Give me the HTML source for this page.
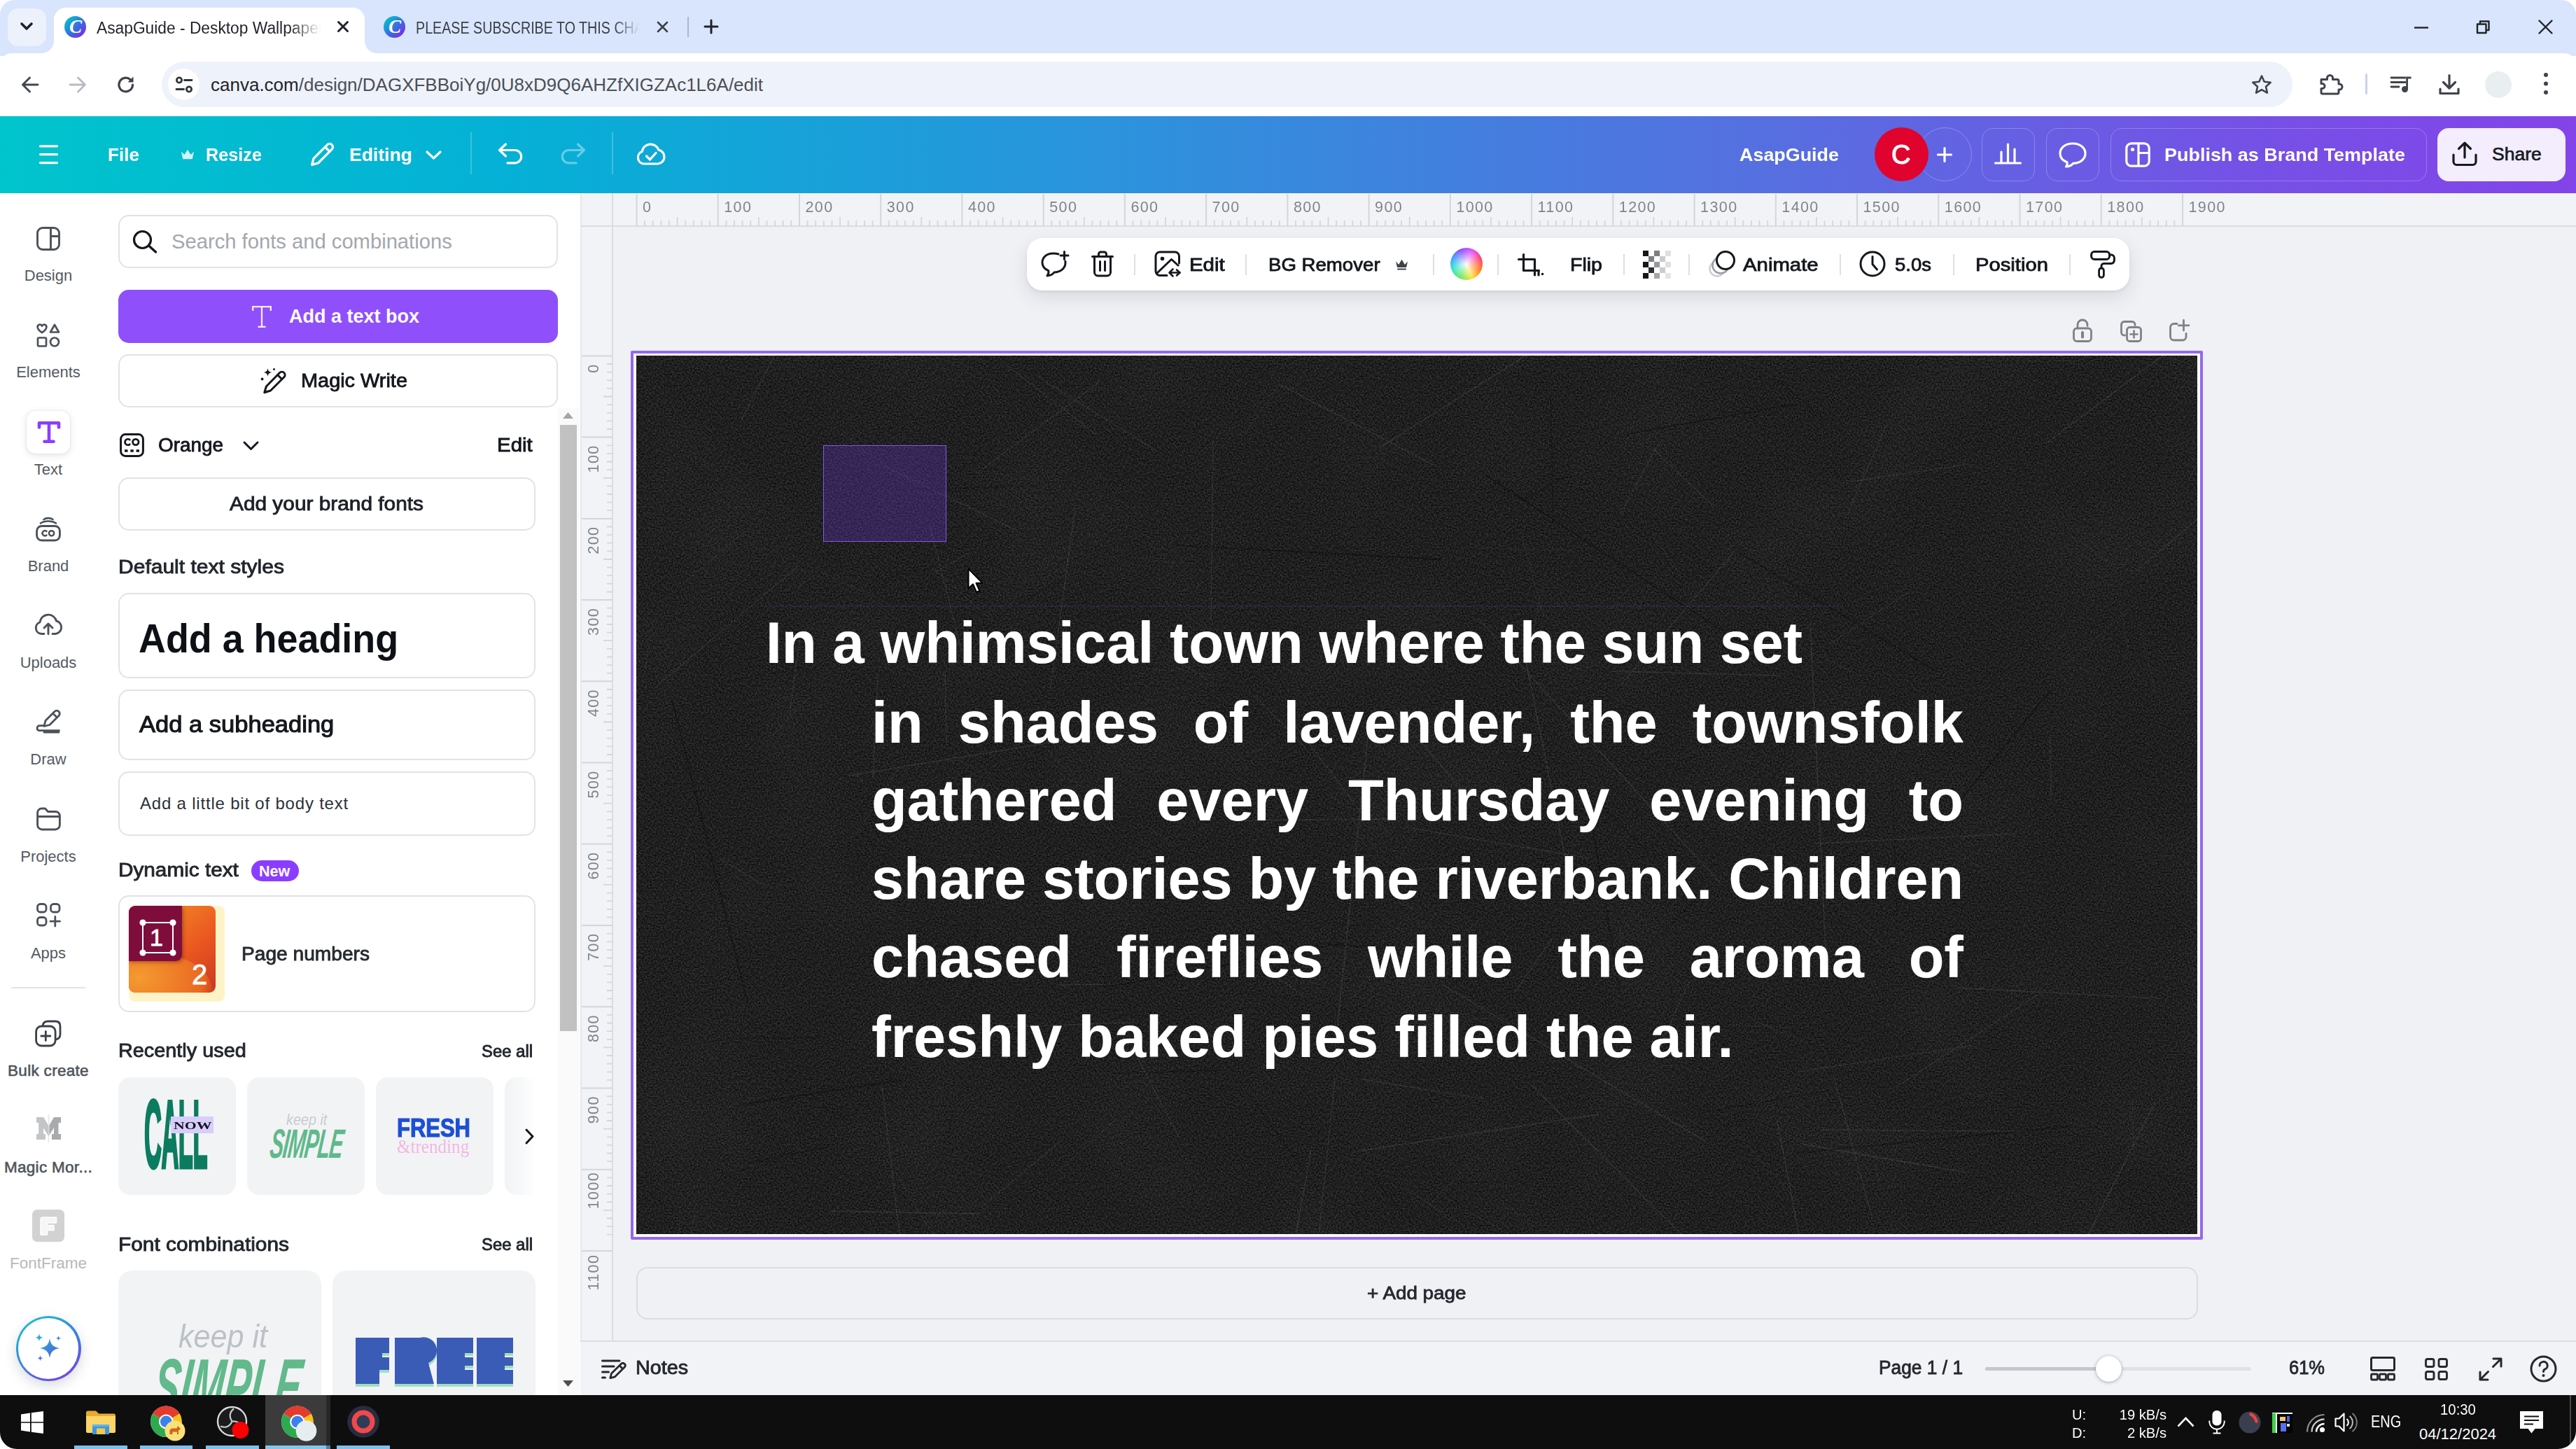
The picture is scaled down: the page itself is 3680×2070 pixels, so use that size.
<!DOCTYPE html>
<html>
<head>
<meta charset="utf-8">
<title>Canva</title>
<style>
*{box-sizing:border-box;margin:0;padding:0}
html,body{width:3680px;height:2070px;overflow:hidden;background:#fff}
body{font-family:"Liberation Sans",sans-serif;color:#0e1318;position:relative}
.abs{position:absolute}
.t{position:absolute;white-space:nowrap;line-height:1;transform-origin:0 0}
svg{position:absolute;overflow:visible}
/* ---------- chrome ---------- */
#tabbar{left:0;top:0;width:3680px;height:80px;background:#d8e5fc}
#tabsearch{left:11px;top:11.5px;width:55px;height:54px;border-radius:15px;background:#ecf1fc}
#tab1{left:77px;top:11px;width:444px;height:66.5px;background:#fff;border-radius:17px 17px 0 0}
#tab1:before,#tab1:after{content:"";position:absolute;bottom:2px;width:17px;height:17px;background:radial-gradient(circle at 0 0,rgba(255,255,255,0) 16.5px,#fff 17px)}
#tab1:before{left:-17px}
#tab1:after{right:-17px;transform:scaleX(-1)}
#toolbar{left:0;top:75.5px;width:3680px;height:90.5px;background:#fff;border-radius:17px 17px 0 0}
#urlpill{left:231px;top:88px;width:3044px;height:65px;border-radius:33px;background:#eef2fa}
#siteinfo{left:240px;top:98px;width:45px;height:45px;border-radius:50%;background:#fff}
/* ---------- canva header ---------- */
#chead{left:0;top:166px;width:3680px;height:110px;background:linear-gradient(90deg,#00c4cc 0%,#05b0d6 20%,#2a94dc 42%,#5570e0 68%,#7650e6 88%,#8344ea 100%)}
.hbtn{position:absolute;top:183px;height:76px;border-radius:16px;border:1.8px solid rgba(255,255,255,.24)}
/* ---------- sidebar / panel ---------- */
#sidebar{left:0;top:276px;width:137px;height:1717px;background:#fff}
#panel{left:137px;top:276px;width:693px;height:1717px;background:#fff}
.slab{position:absolute;left:0;width:138px;text-align:center;font-size:22px;color:#555a62;line-height:1;white-space:nowrap}
.box{position:absolute;border:2px solid #e0e3e7;border-radius:15px;background:#fff}
/* ---------- stage ---------- */
#stage{left:830px;top:276px;width:2850px;height:1642px;background:#f0f1f5}
#bottombar{left:829px;top:1915px;width:2851px;height:79px;background:#f2f3f7;border-top:2px solid #dcdee3}
.ct{position:absolute;left:1245px;width:1560px;font-size:83px;font-weight:bold;color:#fff;line-height:112px;height:112px;white-space:nowrap;transform-origin:0 0;text-shadow:0 0 1px rgba(255,255,255,.3)}
.ct.j{text-align:justify;text-align-last:justify;white-space:normal}
#taskbar{left:0;top:1993px;width:3680px;height:77px;background:#0e0e0f}
</style>
</head>
<body>
<!-- CHROME TAB BAR -->
<div id="tabbar" class="abs"></div>
<div id="tabsearch" class="abs"></div>
<div id="tab1" class="abs"></div>
<div id="toolbar" class="abs"></div>
<div id="urlpill" class="abs"></div>
<div id="siteinfo" class="abs"></div>
<!-- tab search chevron -->
<svg style="left:27px;top:29px" width="22" height="18" viewBox="0 0 22 18"><path d="M4 5 L11 12 L18 5" fill="none" stroke="#1f2328" stroke-width="3.6" stroke-linecap="round" stroke-linejoin="round"/></svg>
<!-- tab1 favicon -->
<div class="abs" style="left:92px;top:23px;width:31px;height:31px;border-radius:50%;background:linear-gradient(135deg,#00c4cc 10%,#3a6be0 55%,#7d2ae8 90%)"></div>
<div class="t" style="left:99px;top:25px;font-family:'Liberation Serif',serif;font-style:italic;font-weight:bold;font-size:27px;color:#fff">C</div>
<div class="t" style="left:138px;top:28.5px;font-size:23px;color:#1f2328;width:324px;overflow:hidden;transform:scaleX(.99);-webkit-mask-image:linear-gradient(90deg,#000 86%,transparent 100%)">AsapGuide - Desktop Wallpaper</div>
<svg style="left:481px;top:29px" width="18" height="18" viewBox="0 0 18 18"><path d="M2.5 2.5 L15.5 15.5 M15.5 2.5 L2.5 15.5" stroke="#1f2328" stroke-width="3" stroke-linecap="round"/></svg>
<!-- tab2 -->
<div class="abs" style="left:548px;top:23px;width:31px;height:31px;border-radius:50%;background:linear-gradient(135deg,#00c4cc 10%,#3a6be0 55%,#7d2ae8 90%)"></div>
<div class="t" style="left:555px;top:25px;font-family:'Liberation Serif',serif;font-style:italic;font-weight:bold;font-size:27px;color:#fff">C</div>
<div class="t" style="left:594px;top:28.5px;font-size:23px;color:#3a3f47;width:377px;overflow:hidden;transform:scaleX(.856);-webkit-mask-image:linear-gradient(90deg,#000 88%,transparent 99%)">PLEASE SUBSCRIBE TO THIS CHANNEL</div>
<svg style="left:938px;top:30px" width="17" height="17" viewBox="0 0 17 17"><path d="M2 2 L15 15 M15 2 L2 15" stroke="#3a3f47" stroke-width="2.6" stroke-linecap="round"/></svg>
<div class="abs" style="left:982px;top:24px;width:2px;height:29px;background:#a9b7d0"></div>
<svg style="left:1005px;top:27px" width="22" height="22" viewBox="0 0 22 22"><path d="M11 2 V20 M2 11 H20" stroke="#1f2328" stroke-width="3" stroke-linecap="round"/></svg>
<!-- window controls -->
<svg style="left:3449px;top:38px" width="20" height="3" viewBox="0 0 20 3"><path d="M0 1.5 H20" stroke="#1f2328" stroke-width="2.4"/></svg>
<svg style="left:3537px;top:28px" width="21" height="21" viewBox="0 0 21 21"><path d="M2 6.5 H14.5 V19 H2 Z M6 6 V2.5 H18.5 V15 H15" fill="none" stroke="#1f2328" stroke-width="2.4" stroke-linejoin="round"/></svg>
<svg style="left:3626px;top:28px" width="21" height="21" viewBox="0 0 21 21"><path d="M1.5 1.5 L19.5 19.5 M19.5 1.5 L1.5 19.5" stroke="#1f2328" stroke-width="2.4" stroke-linecap="round"/></svg>
<!-- nav buttons -->
<svg style="left:30px;top:108px" width="26" height="26" viewBox="0 0 26 26"><path d="M24 13 H3 M12.5 3 L2.5 13 L12.5 23" fill="none" stroke="#42474e" stroke-width="2.9" stroke-linecap="round" stroke-linejoin="round"/></svg>
<svg style="left:98px;top:108px" width="26" height="26" viewBox="0 0 26 26"><path d="M2 13 H23 M13.5 3 L23.5 13 L13.5 23" fill="none" stroke="#b9bcc2" stroke-width="2.9" stroke-linecap="round" stroke-linejoin="round"/></svg>
<svg style="left:167px;top:108px" width="26" height="26" viewBox="0 0 26 26"><path d="M22.5 13 A9.8 9.8 0 1 1 19.2 5.7" fill="none" stroke="#3f444b" stroke-width="3.2" stroke-linecap="round"/><path d="M23.5 1.5 V9.5 H15.5 Z" fill="#3f444b"/></svg>
<!-- site info (tune) icon -->
<svg style="left:250px;top:109px" width="26" height="24" viewBox="0 0 26 24"><circle cx="6" cy="5.5" r="3.6" fill="none" stroke="#30343a" stroke-width="2.8"/><path d="M13.5 5.5 H24" stroke="#30343a" stroke-width="2.8" stroke-linecap="round"/><circle cx="20" cy="18.5" r="3.6" fill="none" stroke="#30343a" stroke-width="2.8"/><path d="M2 18.5 H12.5" stroke="#30343a" stroke-width="2.8" stroke-linecap="round"/></svg>
<div class="t" style="left:301px;top:107.5px;font-size:26px;color:#4b4f56"><span style="color:#1f2328">canva.com</span>/design/DAGXFBBoiYg/0U8xD9Q6AHZfXIGZAc1L6A/edit</div>
<!-- star -->
<svg style="left:3216px;top:106px" width="30" height="29" viewBox="0 0 30 29"><path d="M15 2.5 L18.7 10.8 L27.7 11.7 L21 17.8 L22.9 26.6 L15 22.1 L7.1 26.6 L9 17.8 L2.3 11.7 L11.3 10.8 Z" fill="none" stroke="#3f444b" stroke-width="2.6" stroke-linejoin="round"/></svg>
<!-- extensions puzzle -->
<svg style="left:3313px;top:104px" width="33" height="33" viewBox="0 0 33 33"><path d="M3 9.5 H11.5 V7.5 A4 4 0 0 1 19.5 7.5 V9.5 H26 A2 2 0 0 1 28 11.5 V16 H29 A4 4 0 0 1 29 24 H28 V28 A2 2 0 0 1 26 30 H5 A2 2 0 0 1 3 28 V22.5 H4.5 A3.5 3.5 0 0 0 4.5 15.5 H3 Z" fill="none" stroke="#3f444b" stroke-width="3" stroke-linejoin="round"/></svg>
<div class="abs" style="left:3379px;top:105px;width:3px;height:30px;background:#c9d3e6;border-radius:2px"></div>
<!-- media control -->
<svg style="left:3414px;top:108px" width="32" height="26" viewBox="0 0 32 26"><path d="M2 3 H22 M2 9.5 H22 M2 16 H13" stroke="#3f444b" stroke-width="2.8" stroke-linecap="round"/><circle cx="21.5" cy="19.5" r="4.5" fill="#3f444b"/><path d="M24.6 19.5 V3 H30.5" fill="none" stroke="#3f444b" stroke-width="2.8"/></svg>
<!-- download -->
<svg style="left:3483px;top:105px" width="32" height="32" viewBox="0 0 32 32"><path d="M16 2.5 V20 M7.5 12.5 L16 21 L24.5 12.5" fill="none" stroke="#3f444b" stroke-width="3.2" stroke-linecap="round" stroke-linejoin="round"/><path d="M3 22 V28.5 H29 V22" fill="none" stroke="#3f444b" stroke-width="3.2" stroke-linecap="round" stroke-linejoin="round"/></svg>
<div class="abs" style="left:3550px;top:102px;width:38px;height:38px;border-radius:50%;background:#e9eef0"></div>
<div class="abs" style="left:3634px;top:104px;width:6px;height:6px;border-radius:50%;background:#3f444b;box-shadow:0 12.5px 0 #3f444b,0 25px 0 #3f444b"></div>
<!--CHROME-DETAILS-->

<!-- CANVA HEADER -->
<div id="chead" class="abs"></div>
<!-- hamburger -->
<svg style="left:56px;top:206px" width="27" height="29" viewBox="0 0 27 29"><path d="M1.5 2.8 H25.5 M1.5 14.6 H25.5 M1.5 26.6 H25.5" stroke="#fff" stroke-width="3.2" stroke-linecap="round"/></svg>
<div class="t" style="left:154px;top:208px;font-size:26.5px;font-weight:bold;color:#fff;transform:scaleX(.985)">File</div>
<!-- crown -->
<svg style="left:258px;top:213px" width="20" height="15" viewBox="0 0 20 15"><path d="M1 3.5 L5.5 8 L10 .8 L14.5 8 L19 3.5 L16.8 14.2 H3.2 Z" fill="rgba(255,255,255,.82)"/></svg>
<div class="t" style="left:294px;top:208px;font-size:26.5px;font-weight:bold;color:#fff;transform:scaleX(.952)">Resize</div>
<!-- pencil -->
<svg style="left:443px;top:203px" width="35" height="35" viewBox="0 0 35 35"><path d="M24.5 3.8 a4.6 4.6 0 0 1 6.6 6.6 L11.5 30 L2.6 32.4 L5 23.5 Z M21.5 7 L28 13.5" fill="none" stroke="#fff" stroke-width="3.2" stroke-linejoin="round" stroke-linecap="round"/></svg>
<div class="t" style="left:499px;top:208px;font-size:26.5px;font-weight:bold;color:#fff">Editing</div>
<svg style="left:608px;top:215px" width="23" height="13" viewBox="0 0 23 13"><path d="M2 2 L11.5 11 L21 2" fill="none" stroke="#fff" stroke-width="3.2" stroke-linecap="round" stroke-linejoin="round"/></svg>
<div class="abs" style="left:672px;top:189px;width:2px;height:60px;background:rgba(255,255,255,.22)"></div>
<!-- undo -->
<svg style="left:711px;top:204px" width="37" height="31" viewBox="0 0 37 31"><path d="M11.5 2 L2.5 10.5 L11.5 19 M3.5 10.5 H24.5 A9.2 9.2 0 0 1 24.5 28.9 H14" fill="none" stroke="#fff" stroke-width="3.2" stroke-linecap="round" stroke-linejoin="round"/></svg>
<!-- redo -->
<svg style="left:800px;top:204px" width="37" height="31" viewBox="0 0 37 31"><path d="M25.5 2 L34.5 10.5 L25.5 19 M33.5 10.5 H12.5 A9.2 9.2 0 0 0 12.5 28.9 H23" fill="none" stroke="rgba(255,255,255,.38)" stroke-width="3.2" stroke-linecap="round" stroke-linejoin="round"/></svg>
<div class="abs" style="left:874px;top:189px;width:2px;height:60px;background:rgba(255,255,255,.22)"></div>
<!-- cloud check -->
<svg style="left:909px;top:203px" width="42" height="33" viewBox="0 0 42 33"><path d="M11 31 A9 9 0 0 1 8.2 13.6 A12.2 12.2 0 0 1 31.8 11.2 A10 10 0 0 1 31 31 Z" fill="none" stroke="#fff" stroke-width="3.2" stroke-linejoin="round"/><path d="M14.5 20 L19.5 25 L28 15.5" fill="none" stroke="#fff" stroke-width="3.2" stroke-linecap="round" stroke-linejoin="round"/></svg>
<!-- right side -->
<div class="t" style="left:2485px;top:208px;font-size:26.5px;font-weight:bold;color:#fff;transform:scaleX(1.015)">AsapGuide</div>
<div class="abs" style="left:2740px;top:182px;width:77px;height:77px;border-radius:50%;border:1.8px solid rgba(255,255,255,.26)"></div>
<svg style="left:2767px;top:210px" width="22" height="22" viewBox="0 0 22 22"><path d="M11 1.5 V20.5 M1.5 11 H20.5" stroke="#fff" stroke-width="3.2" stroke-linecap="round"/></svg>
<div class="abs" style="left:2678px;top:182px;width:77px;height:77px;border-radius:50%;background:#e0032e"></div>
<div class="t" style="left:2702px;top:202px;font-size:38px;color:#fff;-webkit-text-stroke:1px #fff">C</div>
<div class="hbtn" style="left:2831px;width:76px"></div>
<svg style="left:2849px;top:204px" width="39" height="31" viewBox="0 0 39 31"><path d="M1.5 29 H37.5 M10 28 V13 M19.5 28 V2 M29 28 V9" stroke="#fff" stroke-width="3.2" stroke-linecap="round"/></svg>
<div class="hbtn" style="left:2923px;width:76px"></div>
<svg style="left:2941px;top:203px" width="40" height="37" viewBox="0 0 40 37"><path d="M20 2 C9.5 2 2 8.2 2 16.2 C2 22 6 26.5 12 28.8 C12.6 31 12 33 10.5 35 C15 34.8 18.5 33 20.5 30.4 C30.8 30.3 38 24.2 38 16.2 C38 8.2 30.5 2 20 2 Z" fill="none" stroke="#fff" stroke-width="3.2" stroke-linejoin="round"/></svg>
<div class="hbtn" style="left:3015px;width:452px"></div>
<svg style="left:3036px;top:203px" width="36" height="36" viewBox="0 0 36 36"><rect x="1.8" y="1.8" width="32.4" height="32.4" rx="7" fill="none" stroke="#fff" stroke-width="3.2"/><path d="M19 2 V34 M19 15.5 H34" stroke="#fff" stroke-width="3.2"/><circle cx="10.5" cy="10.5" r="2.6" fill="#fff"/></svg>
<div class="t" style="left:3092px;top:208px;font-size:26.5px;font-weight:bold;color:#fff;transform:scaleX(1.017)">Publish as Brand Template</div>
<div class="abs" style="left:3482px;top:183px;width:183px;height:76px;border-radius:16px;background:#f3edfd"></div>
<svg style="left:3503px;top:202px" width="36" height="36" viewBox="0 0 36 36"><path d="M18 23 V3 M9.5 10.5 L18 2.2 L26.5 10.5" fill="none" stroke="#161a1f" stroke-width="3.2" stroke-linecap="round" stroke-linejoin="round"/><path d="M2 19 V29 A4.5 4.5 0 0 0 6.5 33.5 H29.5 A4.5 4.5 0 0 0 34 29 V19" fill="none" stroke="#161a1f" stroke-width="3.2" stroke-linecap="round"/></svg>
<div class="t" style="left:3560px;top:207px;font-size:26.5px;color:#161a1f;-webkit-text-stroke:.7px #161a1f">Share</div>
<!--HEADER-DETAILS-->

<!-- SIDEBAR + PANEL -->
<div id="sidebar" class="abs"></div>
<div id="panel" class="abs"></div>
<!-- Design -->
<svg style="left:52px;top:324px" width="34" height="34" viewBox="0 0 34 34"><rect x="1.5" y="1.5" width="31" height="31" rx="7.5" fill="none" stroke="#4c525a" stroke-width="2.9"/><path d="M20.5 2 V32 M20.5 13.5 H32" stroke="#4c525a" stroke-width="2.9"/></svg>
<div class="slab" style="top:383px">Design</div>
<!-- Elements -->
<svg style="left:52px;top:462px" width="34" height="34" viewBox="0 0 34 34"><path d="M8 13.2 C3.5 10 1.6 7.6 1.6 5.2 C1.6 1.4 6.4 .4 8 3.8 C9.6 .4 14.4 1.4 14.4 5.2 C14.4 7.6 12.5 10 8 13.2 Z" fill="none" stroke="#4c525a" stroke-width="2.7" stroke-linejoin="round"/><path d="M26 2 L32 12.5 H20 Z" fill="none" stroke="#4c525a" stroke-width="2.7" stroke-linejoin="round"/><rect x="2" y="20.5" width="12" height="12" rx="1.5" fill="none" stroke="#4c525a" stroke-width="2.7"/><circle cx="26" cy="26.5" r="6" fill="none" stroke="#4c525a" stroke-width="2.7"/></svg>
<div class="slab" style="top:521px">Elements</div>
<!-- Text (active) -->
<div class="abs" style="left:38px;top:587px;width:62px;height:61px;border-radius:13px;background:#fff;box-shadow:0 2px 10px rgba(60,66,80,.16),0 0 2px rgba(60,66,80,.12)"></div>
<svg style="left:53px;top:601px" width="34" height="33" viewBox="0 0 34 33"><path d="M3 9.5 V3.2 H31 V9.5 M17 3.2 V29.8 M10.5 29.8 H23.5" fill="none" stroke="#8b3dff" stroke-width="4.6" stroke-linejoin="round" stroke-linecap="round"/></svg>
<div class="slab" style="top:660px">Text</div>
<!-- Brand -->
<svg style="left:51px;top:738px" width="36" height="36" viewBox="0 0 36 36"><rect x="1.6" y="13.5" width="32.8" height="20.5" rx="7" fill="none" stroke="#4c525a" stroke-width="2.9"/><path d="M7 9.5 C13 5.5 23 5.5 29 9.5 M11.5 4 C15 1.6 21 1.6 24.5 4" fill="none" stroke="#4c525a" stroke-width="2.7" stroke-linecap="round"/><path d="M15.5 21 A3.6 3.6 0 1 0 15.5 26.5" fill="none" stroke="#4c525a" stroke-width="2.5" stroke-linecap="round"/><circle cx="22.6" cy="23.8" r="3.6" fill="none" stroke="#4c525a" stroke-width="2.5"/></svg>
<div class="slab" style="top:798px">Brand</div>
<!-- Uploads -->
<svg style="left:49px;top:876px" width="40" height="32" viewBox="0 0 40 32"><path d="M14 29.5 H10.5 A8.6 8.6 0 0 1 8 12.8 A12 12 0 0 1 31.5 11 A9.4 9.4 0 0 1 30 29.5 H26" fill="none" stroke="#4c525a" stroke-width="2.9" stroke-linecap="round" stroke-linejoin="round"/><path d="M20 29.8 V15.5 M14 21 L20 15 L26 21" fill="none" stroke="#4c525a" stroke-width="2.9" stroke-linecap="round" stroke-linejoin="round"/></svg>
<div class="slab" style="top:936px">Uploads</div>
<!-- Draw -->
<svg style="left:51px;top:1013px" width="37" height="36" viewBox="0 0 37 36"><path d="M27 3.4 a4.2 4.2 0 0 1 6 6 L20 22.5 L12 24.5 L14 16.5 Z M24.5 6 L30.5 12" fill="none" stroke="#4c525a" stroke-width="2.8" stroke-linejoin="round" stroke-linecap="round"/><path d="M12 24.5 H5.5 A3.4 3.4 0 0 0 5.5 31.5 H33.5 M12 34 H33" fill="none" stroke="#4c525a" stroke-width="2.8" stroke-linecap="round" stroke-linejoin="round" transform="translate(0,-.8)"/></svg>
<div class="slab" style="top:1074px">Draw</div>
<!-- Projects -->
<svg style="left:52px;top:1153px" width="35" height="34" viewBox="0 0 35 34"><path d="M1.6 8 A6 6 0 0 1 7.6 2 H12.5 L16.5 6.5 H27.4 A6 6 0 0 1 33.4 12.5 V25.5 A6.5 6.5 0 0 1 26.9 32 H8.1 A6.5 6.5 0 0 1 1.6 25.5 Z M2 13.5 H33" fill="none" stroke="#4c525a" stroke-width="2.9" stroke-linejoin="round"/></svg>
<div class="slab" style="top:1213px">Projects</div>
<!-- Apps -->
<svg style="left:52px;top:1290px" width="35" height="34" viewBox="0 0 35 34"><rect x="1.5" y="1.5" width="12.5" height="11.5" rx="4" fill="none" stroke="#4c525a" stroke-width="2.8"/><rect x="20.5" y="1.5" width="12.5" height="11.5" rx="4" fill="none" stroke="#4c525a" stroke-width="2.8"/><rect x="1.5" y="20.5" width="12.5" height="11.5" rx="4" fill="none" stroke="#4c525a" stroke-width="2.8"/><path d="M26.8 19.5 V33 M20 26.2 H33.5" stroke="#4c525a" stroke-width="2.8" stroke-linecap="round"/></svg>
<div class="slab" style="top:1351px">Apps</div>
<div class="abs" style="left:16px;top:1410px;width:106px;height:2px;background:#e1e3e7"></div>
<!-- Bulk create -->
<svg style="left:50px;top:1457px" width="38" height="39" viewBox="0 0 38 39"><path d="M11 8.5 C11.5 4 14 2 18.5 2 H29 C33.5 2 36 4.5 36 9 V20.5 C36 25 34 27.2 30 27.8" fill="none" stroke="#3c4148" stroke-width="2.8" stroke-linecap="round"/><rect x="1.6" y="9" width="27.5" height="28" rx="7.5" fill="none" stroke="#3c4148" stroke-width="2.8"/><path d="M15.3 16.5 V29.5 M8.8 23 H21.8" stroke="#3c4148" stroke-width="2.8" stroke-linecap="round"/></svg>
<div class="slab" style="top:1519px;color:#4f545c;font-size:22.5px;-webkit-text-stroke:.6px #4f545c;letter-spacing:.3px">Bulk create</div>
<!-- Magic Morph -->
<svg style="left:51px;top:1592px" width="37" height="40" viewBox="0 0 37 40"><path d="M1 4 H11 L18.5 17 L26 4 H36 V12 H32.5 V28 H36 V36 H23 V28 H26 V19 L18.5 31 L11 19 V28 H14 V36 H1 V28 H4.5 V12 H1 Z" fill="#a9aaac"/><path d="M18.5 0 V40" stroke="#e9e9e9" stroke-width="2"/><path d="M1 4 H11 L18.5 17 V31 L11 19 V28 H14 V36 H1 V28 H4.5 V12 H1 Z" fill="#c4c5c7"/></svg>
<div class="slab" style="top:1657px;color:#4f545c;font-size:22.5px;-webkit-text-stroke:.6px #4f545c;letter-spacing:.3px">Magic Mor...</div>
<!-- FontFrame -->
<div class="abs" style="left:46px;top:1728px;width:46px;height:46px;border-radius:7px;background:#d2d2d3"></div>
<svg style="left:56px;top:1738px" width="26" height="27" viewBox="0 0 26 27"><path d="M2 4 A3 3 0 0 1 5 1 H24.5 V9 H11.5 V12.5 H21 V19.5 H11.5 V26 H2 Z" fill="#f6f6f6" stroke="#fff" stroke-width="1.5" stroke-linejoin="round"/></svg>
<div class="slab" style="top:1794px;color:#b6b9be;font-size:22.5px">FontFrame</div>
<!-- magic button -->
<div class="abs" style="left:22.5px;top:1880px;width:93px;height:93px;border-radius:50%;background:linear-gradient(150deg,#19c3cf 5%,#3b82e0 50%,#7a3fe0 95%);box-shadow:0 6px 18px rgba(40,50,90,.18)"></div>
<div class="abs" style="left:25.7px;top:1883.2px;width:86.6px;height:86.6px;border-radius:50%;background:#fff"></div>
<svg style="left:47px;top:1903px" width="44" height="46" viewBox="0 0 44 46"><defs><linearGradient id="spk" x1="0" y1="0" x2="1" y2="1"><stop offset="0" stop-color="#23b3d6"/><stop offset="1" stop-color="#5a55e0"/></linearGradient></defs><path d="M24 9 C25.5 18 28.5 21 38 23 C28.5 25 25.5 28 24 37 C22.5 28 19.5 25 10 23 C19.5 21 22.5 18 24 9 Z" fill="url(#spk)"/><path d="M9 2 C9.6 6 10.6 7 14.5 7.8 C10.6 8.6 9.6 9.6 9 13.6 C8.4 9.6 7.4 8.6 3.5 7.8 C7.4 7 8.4 6 9 2 Z" fill="#27add7"/><path d="M36.5 5 C36.9 7.6 37.6 8.3 40.2 8.8 C37.6 9.3 36.9 10 36.5 12.6 C36.1 10 35.4 9.3 32.8 8.8 C35.4 8.3 36.1 7.6 36.5 5 Z" fill="#3f86dd"/><path d="M10.5 33 C10.9 36 11.7 36.8 14.7 37.3 C11.7 37.8 10.9 38.6 10.5 41.6 C10.1 38.6 9.3 37.8 6.3 37.3 C9.3 36.8 10.1 36 10.5 33 Z" fill="#4a6fe0"/></svg>
<!--SIDEBAR-DETAILS-->
<!-- search -->
<div class="box" style="left:169px;top:307px;width:628px;height:76px"></div>
<svg style="left:189px;top:328px" width="36" height="34" viewBox="0 0 36 34"><circle cx="14.5" cy="14.5" r="12" fill="none" stroke="#14181d" stroke-width="3.2"/><path d="M23.5 23 L33.5 32" stroke="#14181d" stroke-width="3.4" stroke-linecap="round"/></svg>
<div class="t" style="left:245px;top:331.3px;font-size:29.2px;color:#a3a7ad">Search fonts and combinations</div>
<!-- add text box -->
<div class="abs" style="left:169px;top:414px;width:628px;height:76px;border-radius:15px;background:#8f50fc"></div>
<svg style="left:360px;top:437px" width="28" height="31" viewBox="0 0 28 31"><path d="M1.2 7 V1.2 H26.8 V7 M14 1.2 V29.6 M8.5 29.8 H19.5" fill="none" stroke="#f6e9ff" stroke-width="2.3" stroke-linejoin="miter"/></svg>
<div class="t" style="left:413px;top:439.3px;font-size:27px;font-weight:bold;color:#fff">Add a text box</div>
<!-- magic write -->
<div class="box" style="left:169px;top:506px;width:628px;height:76px"></div>
<svg style="left:371px;top:525px" width="40" height="39" viewBox="0 0 40 39"><path d="M28.5 7.5 a4.4 4.4 0 0 1 6.3 6.3 L15.5 33 L6.8 35.8 L9.4 27 Z M25.5 10.5 L31.8 16.8" fill="none" stroke="#14181d" stroke-width="3" stroke-linejoin="round" stroke-linecap="round"/><path d="M11.5 1 C12.2 5.2 13.2 6.2 17.5 7 C13.2 7.8 12.2 8.8 11.5 13 C10.8 8.8 9.8 7.8 5.5 7 C9.8 6.2 10.8 5.2 11.5 1 Z" fill="#14181d"/><circle cx="3.6" cy="16.5" r="1.9" fill="#14181d"/><circle cx="20.5" cy="2.6" r="1.5" fill="#14181d"/></svg>
<div class="t" style="left:430px;top:531.3px;font-size:27px;-webkit-text-stroke:.85px;color:#14181d;transform:scaleX(1.070)">Magic Write</div>
<!-- scrollbar -->
<div class="abs" style="left:797px;top:583px;width:31px;height:1410px;background:#fafafa"></div>
<svg style="left:804px;top:589px" width="15" height="9" viewBox="0 0 15 9"><path d="M0 9 L7.5 0 L15 9 Z" fill="#a4a4a4"/></svg>
<div class="abs" style="left:800px;top:607px;width:24px;height:866px;background:#c1c1c1"></div>
<svg style="left:804px;top:1972px" width="15" height="9" viewBox="0 0 15 9"><path d="M0 0 L7.5 9 L15 0 Z" fill="#4f4f4f"/></svg>
<!-- brand kit row -->
<svg style="left:171px;top:619px" width="35" height="34" viewBox="0 0 35 34"><rect x="1.6" y="1.6" width="31.8" height="30.8" rx="6.5" fill="none" stroke="#14181d" stroke-width="3"/><path d="M14.3 9.2 A4.2 4.2 0 1 0 14.3 15.8" fill="none" stroke="#14181d" stroke-width="2.8" stroke-linecap="round"/><circle cx="22.8" cy="12.5" r="4.2" fill="none" stroke="#14181d" stroke-width="2.8"/><path d="M7 25 H11.5 M15.3 25 H19.8 M23.6 25 H28" stroke="#14181d" stroke-width="3.4"/></svg>
<div class="t" style="left:226px;top:623.3px;font-size:27px;-webkit-text-stroke:.85px;color:#14181d;transform:scaleX(1.032)">Orange</div>
<svg style="left:347px;top:630px" width="23" height="14" viewBox="0 0 23 14"><path d="M2 2 L11.5 11.5 L21 2" fill="none" stroke="#14181d" stroke-width="3" stroke-linecap="round" stroke-linejoin="round"/></svg>
<div class="t" style="left:710px;top:623.3px;font-size:27px;-webkit-text-stroke:.85px;color:#14181d;transform:scaleX(1.090)">Edit</div>
<div class="box" style="left:169px;top:682px;width:596px;height:76px"></div>
<div class="t" style="left:328px;top:707.3px;font-size:27px;-webkit-text-stroke:.85px;color:#1d2228;transform:scaleX(1.105)">Add your brand fonts</div>
<div class="t" style="left:169px;top:797.3px;font-size:27px;-webkit-text-stroke:.85px;color:#22272d;transform:scaleX(1.112)">Default text styles</div>
<!-- heading -->
<div class="box" style="left:169px;top:847px;width:596px;height:122px"></div>
<div class="t" style="left:198px;top:883.5px;font-size:57px;font-weight:bold;color:#0d1116;transform:scaleX(.945)">Add a heading</div>
<div class="box" style="left:169px;top:985px;width:596px;height:101px"></div>
<div class="t" style="left:199px;top:1019.3px;font-size:32.5px;-webkit-text-stroke:1.1px;color:#14181d;transform:scaleX(1.062)">Add a subheading</div>
<div class="box" style="left:169px;top:1102px;width:596px;height:92px"></div>
<div class="t" style="left:200px;top:1136.3px;font-size:24px;color:#2c3138;letter-spacing:.8px">Add a little bit of body text</div>
<!-- dynamic text -->
<div class="t" style="left:169px;top:1230.3px;font-size:27px;-webkit-text-stroke:.85px;color:#22272d;transform:scaleX(1.101)">Dynamic text</div>
<div class="abs" style="left:359px;top:1229px;width:68px;height:30px;border-radius:15px;background:#8b3dff"></div>
<div class="t" style="left:370px;top:1235.3px;font-size:21.5px;font-weight:bold;color:#fff">New</div>
<div class="box" style="left:169px;top:1279px;width:596px;height:167px"></div>
<div class="abs" style="left:184px;top:1294px;width:137px;height:137px;border-radius:9px;background:#fdf3c8"></div>
<div class="abs" style="left:184px;top:1294px;width:124px;height:124px;border-radius:9px;background:linear-gradient(140deg,#f07a24 30%,#ea5620 62%,#c8371f 100%);overflow:hidden"><div class="abs" style="left:-30px;top:70px;width:150px;height:110px;border-radius:50%;background:radial-gradient(ellipse at 30% 30%,#f59a30,#ea6a22 60%,rgba(220,80,30,0) 75%)"></div></div>
<div class="abs" style="left:184px;top:1294px;width:76px;height:79px;border-radius:9px 0 9px 0;background:#7f0d3c;box-shadow:2px 2px 5px rgba(60,0,20,.35)"></div>
<svg style="left:198px;top:1312px" width="54" height="54" viewBox="0 0 54 54"><rect x="6" y="6" width="43" height="43" fill="none" stroke="#fff" stroke-width="2"/><circle cx="6" cy="6" r="4.6" fill="#fff"/><circle cx="49" cy="6" r="4.6" fill="#fff"/><circle cx="6" cy="49" r="4.6" fill="#fff"/><circle cx="49" cy="49" r="4.6" fill="#fff"/></svg>
<div class="t" style="left:214px;top:1322px;font-size:34px;color:#fff;-webkit-text-stroke:.8px #fff">1</div>
<div class="t" style="left:274px;top:1372px;font-size:40px;color:#fff;-webkit-text-stroke:.8px #fff">2</div>
<div class="t" style="left:345px;top:1350.3px;font-size:27px;-webkit-text-stroke:.85px;color:#262b31;transform:scaleX(1.042)">Page numbers</div>
<!-- recently used -->
<div class="t" style="left:169px;top:1488.3px;font-size:27px;-webkit-text-stroke:.85px;color:#22272d;transform:scaleX(1.068)">Recently used</div>
<div class="t" style="left:688px;top:1491.3px;font-size:23px;-webkit-text-stroke:.85px;color:#22272d;transform:scaleX(1.038)">See all</div>
<div class="abs" style="left:169px;top:1539px;width:168px;height:168px;border-radius:17px;background:#f2f3f5"></div>
<div class="abs" style="left:353px;top:1539px;width:168px;height:168px;border-radius:17px;background:#f2f3f5"></div>
<div class="abs" style="left:537px;top:1539px;width:168px;height:168px;border-radius:17px;background:#f2f3f5"></div>
<div class="abs" style="left:721px;top:1539px;width:44px;height:168px;border-radius:17px 0 0 17px;background:linear-gradient(90deg,#f2f3f5 0%,#f7f8f9 50%,#fff 100%)"></div>
<!-- CALL NOW -->
<div class="t" style="left:206px;top:1551px;font-size:138px;font-weight:bold;color:#0c7c60;letter-spacing:-2px;-webkit-text-stroke:5px #0c7c60;transform:scaleX(.25)">CALL</div>
<div class="abs" style="left:244px;top:1595px;width:61px;height:24px;background:#d9cdfb"></div>
<div class="t" style="left:248px;top:1601.3px;font-family:'Liberation Serif',serif;font-size:15px;font-weight:bold;color:#15131c;transform:scaleX(1.45)">NOW</div>
<!-- keep it SIMPLE -->
<div class="t" style="left:409px;top:1589px;font-size:22px;font-style:italic;color:#c6cacf;transform:scaleX(.9)">keep it</div>
<div class="t" style="left:390px;top:1605.4px;font-size:58.6px;font-weight:bold;font-style:italic;color:#5fb98b;letter-spacing:-2px;transform:skewX(-7deg) scaleX(.502)">SIMPLE</div>
<!-- FRESH & trending -->
<div class="t" style="left:567px;top:1594.3px;font-size:36px;font-weight:bold;color:#1d4fd6;-webkit-text-stroke:1.2px #1d4fd6;transform:scaleX(.86)">FRESH</div>
<div class="t" style="left:567px;top:1625.3px;font-family:'Liberation Serif',serif;font-size:27px;color:#f3b5e2;transform:scaleX(.93)">&amp;trending</div>
<svg style="left:750px;top:1612px" width="13" height="23" viewBox="0 0 13 23"><path d="M2 2 L11 11.5 L2 21" fill="none" stroke="#14181d" stroke-width="3" stroke-linecap="round" stroke-linejoin="round"/></svg>
<!-- font combinations -->
<div class="t" style="left:169px;top:1765.3px;font-size:27px;-webkit-text-stroke:.85px;color:#22272d;transform:scaleX(1.106)">Font combinations</div>
<div class="t" style="left:688px;top:1767.3px;font-size:23px;-webkit-text-stroke:.85px;color:#22272d;transform:scaleX(1.038)">See all</div>
<div class="abs" style="left:169px;top:1815px;width:290px;height:178px;border-radius:20px 20px 0 0;background:#f2f3f5;overflow:hidden">
 <div class="t" style="left:86px;top:71px;font-size:46px;font-style:italic;color:#bcc1c7;transform:scaleX(.937)">keep it</div>
 <div class="t" style="left:58px;top:109.7px;font-size:113px;font-weight:bold;font-style:italic;color:#62b98c;transform:skewX(-7deg) scaleX(.5)">SIMPLE</div>
</div>
<div class="abs" style="left:475px;top:1815px;width:290px;height:178px;border-radius:20px 20px 0 0;background:#f2f3f5;overflow:hidden">
 <svg style="left:33px;top:96px" width="225" height="72" viewBox="0 0 225 72"><g fill="#9fdfc0" transform="translate(0,4)"><path d="M0 0 H48 V22 H38 V28 H48 V46 H34 V66 H0 Z"/><path d="M56 0 H92 A19 19 0 0 1 104 36 L112 66 H56 Z"/><path d="M116 0 H168 V22 H156 V28 H168 V40 H156 V46 H168 V66 H116 Z"/><path d="M173 0 H225 V22 H213 V28 H225 V40 H213 V46 H225 V66 H173 Z"/></g><g fill="#3a5cb6"><path d="M0 0 H48 V22 H38 V28 H48 V46 H34 V66 H0 Z"/><path d="M56 0 H92 A19 19 0 0 1 104 36 L112 66 H56 Z"/><path d="M116 0 H168 V22 H156 V28 H168 V40 H156 V46 H168 V66 H116 Z"/><path d="M173 0 H225 V22 H213 V28 H225 V40 H213 V46 H225 V66 H173 Z"/></g></svg>
</div>
<!--PANEL-DETAILS-->

<!-- STAGE -->
<div id="stage" class="abs"></div>
<!--STAGE-BEGIN--><div class="abs" style="left:829px;top:276px;width:2851px;height:48px;background:#f2f3f7;border-bottom:2px solid #dadce1"></div>
<div class="abs" style="left:829px;top:324px;width:47px;height:1592px;background:#f2f3f7;border-right:2px solid #dadce1;border-left:2px solid #e6e8ec"></div>
<div class="abs" style="left:829px;top:276px;width:47px;height:48px;background:#f2f3f7;border-right:2px solid #dadce1;border-bottom:2px solid #dadce1;border-left:2px solid #e6e8ec"></div>
<svg style="left:0;top:0" width="3680" height="2070" viewBox="0 0 3680 2070"><path d="M909.5 277V323M1025.7 277V323M1142.0 277V323M1258.2 277V323M1374.4 277V323M1490.7 277V323M1606.9 277V323M1723.1 277V323M1839.4 277V323M1955.6 277V323M2071.8 277V323M2188.1 277V323M2304.3 277V323M2420.6 277V323M2536.8 277V323M2653.0 277V323M2769.3 277V323M2885.5 277V323M3001.7 277V323M3118.0 277V323" stroke="#d3d6db" stroke-width="2" fill="none"/><path d="M967.6 310V323M1083.9 310V323M1200.1 310V323M1316.3 310V323M1432.6 310V323M1548.8 310V323M1665.0 310V323M1781.3 310V323M1897.5 310V323M2013.7 310V323M2130.0 310V323M2246.2 310V323M2362.4 310V323M2478.7 310V323M2594.9 310V323M2711.1 310V323M2827.4 310V323M2943.6 310V323M3059.8 310V323M921.1 315V323M932.7 315V323M944.4 315V323M956.0 315V323M979.2 315V323M990.9 315V323M1002.5 315V323M1014.1 315V323M1037.4 315V323M1049.0 315V323M1060.6 315V323M1072.2 315V323M1095.5 315V323M1107.1 315V323M1118.7 315V323M1130.3 315V323M1153.6 315V323M1165.2 315V323M1176.8 315V323M1188.5 315V323M1211.7 315V323M1223.3 315V323M1235.0 315V323M1246.6 315V323M1269.8 315V323M1281.5 315V323M1293.1 315V323M1304.7 315V323M1327.9 315V323M1339.6 315V323M1351.2 315V323M1362.8 315V323M1386.1 315V323M1397.7 315V323M1409.3 315V323M1420.9 315V323M1444.2 315V323M1455.8 315V323M1467.4 315V323M1479.1 315V323M1502.3 315V323M1513.9 315V323M1525.5 315V323M1537.2 315V323M1560.4 315V323M1572.0 315V323M1583.7 315V323M1595.3 315V323M1618.5 315V323M1630.2 315V323M1641.8 315V323M1653.4 315V323M1676.7 315V323M1688.3 315V323M1699.9 315V323M1711.5 315V323M1734.8 315V323M1746.4 315V323M1758.0 315V323M1769.6 315V323M1792.9 315V323M1804.5 315V323M1816.1 315V323M1827.8 315V323M1851.0 315V323M1862.6 315V323M1874.3 315V323M1885.9 315V323M1909.1 315V323M1920.7 315V323M1932.4 315V323M1944.0 315V323M1967.2 315V323M1978.9 315V323M1990.5 315V323M2002.1 315V323M2025.4 315V323M2037.0 315V323M2048.6 315V323M2060.2 315V323M2083.5 315V323M2095.1 315V323M2106.7 315V323M2118.3 315V323M2141.6 315V323M2153.2 315V323M2164.8 315V323M2176.5 315V323M2199.7 315V323M2211.3 315V323M2223.0 315V323M2234.6 315V323M2257.8 315V323M2269.4 315V323M2281.1 315V323M2292.7 315V323M2315.9 315V323M2327.6 315V323M2339.2 315V323M2350.8 315V323M2374.1 315V323M2385.7 315V323M2397.3 315V323M2408.9 315V323M2432.2 315V323M2443.8 315V323M2455.4 315V323M2467.0 315V323M2490.3 315V323M2501.9 315V323M2513.5 315V323M2525.2 315V323M2548.4 315V323M2560.0 315V323M2571.7 315V323M2583.3 315V323M2606.5 315V323M2618.2 315V323M2629.8 315V323M2641.4 315V323M2664.6 315V323M2676.3 315V323M2687.9 315V323M2699.5 315V323M2722.8 315V323M2734.4 315V323M2746.0 315V323M2757.6 315V323M2780.9 315V323M2792.5 315V323M2804.1 315V323M2815.8 315V323M2839.0 315V323M2850.6 315V323M2862.2 315V323M2873.9 315V323M2897.1 315V323M2908.7 315V323M2920.4 315V323M2932.0 315V323M2955.2 315V323M2966.9 315V323M2978.5 315V323M2990.1 315V323M3013.4 315V323M3025.0 315V323M3036.6 315V323M3048.2 315V323M3071.5 315V323M3083.1 315V323M3094.7 315V323M3106.3 315V323" stroke="#d3d6db" stroke-width="1.8" fill="none"/><g font-family="Liberation Sans, sans-serif" font-size="21.5" letter-spacing="1.4" fill="#7e838a" opacity=".99"><text x="918.0" y="302.5">0</text><text x="1034.2" y="302.5">100</text><text x="1150.5" y="302.5">200</text><text x="1266.7" y="302.5">300</text><text x="1382.9" y="302.5">400</text><text x="1499.2" y="302.5">500</text><text x="1615.4" y="302.5">600</text><text x="1731.6" y="302.5">700</text><text x="1847.9" y="302.5">800</text><text x="1964.1" y="302.5">900</text><text x="2080.3" y="302.5">1000</text><text x="2196.6" y="302.5">1100</text><text x="2312.8" y="302.5">1200</text><text x="2429.1" y="302.5">1300</text><text x="2545.3" y="302.5">1400</text><text x="2661.5" y="302.5">1500</text><text x="2777.8" y="302.5">1600</text><text x="2894.0" y="302.5">1700</text><text x="3010.2" y="302.5">1800</text><text x="3126.5" y="302.5">1900</text></g>
<path d="M831 508.4H875M831 624.6H875M831 740.9H875M831 857.1H875M831 973.3H875M831 1089.6H875M831 1205.8H875M831 1322.0H875M831 1438.3H875M831 1554.5H875M831 1670.8H875M831 1787.0H875" stroke="#d3d6db" stroke-width="2" fill="none"/><path d="M862 566.5H875M862 682.8H875M862 799.0H875M862 915.2H875M862 1031.5H875M862 1147.7H875M862 1263.9H875M862 1380.2H875M862 1496.4H875M862 1612.6H875M862 1728.9H875M867 520.0H875M867 531.6H875M867 543.3H875M867 554.9H875M867 578.1H875M867 589.8H875M867 601.4H875M867 613.0H875M867 636.3H875M867 647.9H875M867 659.5H875M867 671.1H875M867 694.4H875M867 706.0H875M867 717.6H875M867 729.2H875M867 752.5H875M867 764.1H875M867 775.7H875M867 787.4H875M867 810.6H875M867 822.2H875M867 833.9H875M867 845.5H875M867 868.7H875M867 880.4H875M867 892.0H875M867 903.6H875M867 926.8H875M867 938.5H875M867 950.1H875M867 961.7H875M867 985.0H875M867 996.6H875M867 1008.2H875M867 1019.8H875M867 1043.1H875M867 1054.7H875M867 1066.3H875M867 1078.0H875M867 1101.2H875M867 1112.8H875M867 1124.4H875M867 1136.1H875M867 1159.3H875M867 1170.9H875M867 1182.6H875M867 1194.2H875M867 1217.4H875M867 1229.1H875M867 1240.7H875M867 1252.3H875M867 1275.6H875M867 1287.2H875M867 1298.8H875M867 1310.4H875M867 1333.7H875M867 1345.3H875M867 1356.9H875M867 1368.5H875M867 1391.8H875M867 1403.4H875M867 1415.0H875M867 1426.7H875M867 1449.9H875M867 1461.5H875M867 1473.2H875M867 1484.8H875M867 1508.0H875M867 1519.6H875M867 1531.3H875M867 1542.9H875M867 1566.1H875M867 1577.8H875M867 1589.4H875M867 1601.0H875M867 1624.3H875M867 1635.9H875M867 1647.5H875M867 1659.1H875M867 1682.4H875M867 1694.0H875M867 1705.6H875M867 1717.2H875M867 1740.5H875M867 1752.1H875M867 1763.7H875" stroke="#d3d6db" stroke-width="1.8" fill="none"/><g font-family="Liberation Sans, sans-serif" font-size="21.5" letter-spacing="1.4" fill="#7e838a" opacity=".99"><text transform="translate(855 532.8) rotate(-90)">0</text><text transform="translate(855 675.4) rotate(-90)">100</text><text transform="translate(855 791.7) rotate(-90)">200</text><text transform="translate(855 907.9) rotate(-90)">300</text><text transform="translate(855 1024.1) rotate(-90)">400</text><text transform="translate(855 1140.4) rotate(-90)">500</text><text transform="translate(855 1256.6) rotate(-90)">600</text><text transform="translate(855 1372.8) rotate(-90)">700</text><text transform="translate(855 1489.1) rotate(-90)">800</text><text transform="translate(855 1605.3) rotate(-90)">900</text><text transform="translate(855 1727.3) rotate(-90)">1000</text><text transform="translate(855 1843.6) rotate(-90)">1100</text></g></svg>
<!-- floating toolbar -->
<div class="abs" style="left:1467px;top:340px;width:1575px;height:75px;border-radius:22px;background:#fff;box-shadow:0 2px 4px rgba(50,58,75,.08),0 10px 26px rgba(50,58,75,.13)"></div>
<!-- comment+ -->
<svg style="left:1487px;top:358px" width="42" height="40" viewBox="0 0 42 40"><path d="M25 5 C22.5 4.3 20 4 17.5 4 C8.5 4 2 9.5 2 17 C2 22.3 5.5 26.5 10.8 28.6 C11.4 31 10.8 33.5 9 36 C13.8 35.6 17.2 33.6 19 31 C28 30.7 35 25.3 35 17.5 C35 16.8 34.9 16 34.8 15.3" fill="none" stroke="#14181d" stroke-width="3" stroke-linecap="round" stroke-linejoin="round"/><path d="M33.5 1.5 V12.5 M28 7 H39" stroke="#14181d" stroke-width="3" stroke-linecap="round"/></svg>
<!-- trash -->
<svg style="left:1559px;top:358px" width="32" height="38" viewBox="0 0 32 38"><path d="M1.5 8.5 H30.5 M10.5 8 V5 A3 3 0 0 1 13.5 2 H18.5 A3 3 0 0 1 21.5 5 V8 M4.5 9 V31 A5 5 0 0 0 9.5 36 H22.5 A5 5 0 0 0 27.5 31 V9 M12.5 15.5 V28.5 M19.5 15.5 V28.5" fill="none" stroke="#14181d" stroke-width="3" stroke-linecap="round" stroke-linejoin="round"/></svg>
<div class="abs" style="left:1620px;top:363px;width:2px;height:30px;background:#dcdfe4"></div>
<!-- edit image -->
<svg style="left:1649px;top:358px" width="38" height="38" viewBox="0 0 38 38"><path d="M18 35.5 H8 A6 6 0 0 1 2 29.5 V8 A6 6 0 0 1 8 2 H29.5 A6 6 0 0 1 35.5 8 V18" fill="none" stroke="#14181d" stroke-width="3" stroke-linecap="round"/><circle cx="11.5" cy="11.5" r="2.8" fill="#14181d"/><path d="M3 33 L24.5 12.5 L35 22" fill="none" stroke="#14181d" stroke-width="3" stroke-linejoin="round"/><path d="M22 31.5 H36.5 M26.5 26.5 L21.5 31.5 L26.5 36.5" fill="none" stroke="#14181d" stroke-width="2.6" stroke-linecap="round" stroke-linejoin="round"/><path d="M32 27.5 L36.5 31.5 L32 35.5" fill="none" stroke="#14181d" stroke-width="2.6" stroke-linecap="round" stroke-linejoin="round"/></svg>
<div class="t" style="left:1699px;top:365px;font-size:26.5px;-webkit-text-stroke:.85px;color:#14181d;transform:scaleX(1.109)">Edit</div>
<div class="abs" style="left:1779px;top:363px;width:2px;height:30px;background:#dcdfe4"></div>
<div class="t" style="left:1812px;top:365px;font-size:26.5px;-webkit-text-stroke:.85px;color:#14181d;transform:scaleX(1.042)">BG Remover</div>
<svg style="left:1993px;top:370px" width="19" height="16" viewBox="0 0 19 16"><path d="M1 3.5 L5.2 8 L9.5 .8 L13.8 8 L18 3.5 L16 12 H3 Z M3.2 13.6 H15.8 V15.4 H3.2 Z" fill="#3d4249"/></svg>
<div class="abs" style="left:2047px;top:363px;width:2px;height:30px;background:#dcdfe4"></div>
<!-- colour wheel -->
<div class="abs" style="left:2072px;top:354px;width:46px;height:46px;border-radius:50%;background:conic-gradient(from 68deg,#ff3d6e,#ff7a1a,#ffe23a,#6fe85a,#2ee6c8,#3aa0ff,#8a4dff,#e24dff,#ff3d6e)"></div>
<div class="abs" style="left:2072px;top:354px;width:46px;height:46px;border-radius:50%;background:radial-gradient(circle,rgba(255,255,255,.95) 0%,rgba(255,255,255,.55) 28%,rgba(255,255,255,0) 68%)"></div>
<div class="abs" style="left:2139px;top:363px;width:2px;height:30px;background:#dcdfe4"></div>
<!-- crop -->
<svg style="left:2168px;top:362px" width="40" height="36" viewBox="0 0 40 36"><path d="M8.5 1.5 V24.5 H30.5 M1.5 8.5 H24.5 V31" fill="none" stroke="#14181d" stroke-width="3.2" stroke-linecap="round" stroke-linejoin="round"/><circle cx="35.5" cy="29.5" r="1.8" fill="#14181d"/><path d="M30 24.5 V31" stroke="#14181d" stroke-width="3.2" stroke-linecap="round"/></svg>
<div class="t" style="left:2243px;top:365px;font-size:26.5px;-webkit-text-stroke:.85px;color:#14181d;transform:scaleX(1.077)">Flip</div>
<div class="abs" style="left:2319px;top:363px;width:2px;height:30px;background:#dcdfe4"></div>
<!-- transparency -->
<svg style="left:2347px;top:358px" width="40" height="40" viewBox="0 0 40 40"><g fill="#14181d"><rect x="0" y="0" width="8" height="8"/><rect x="0" y="16" width="8" height="8"/><rect x="0" y="32" width="8" height="8"/><rect x="8" y="24" width="8" height="8" opacity=".9"/></g><g fill="#14181d" opacity=".55"><rect x="8" y="8" width="8" height="8"/><rect x="16" y="0" width="8" height="8"/><rect x="16" y="16" width="8" height="8" opacity=".8"/><rect x="16" y="32" width="8" height="8" opacity=".7"/></g><g fill="#14181d" opacity=".22"><rect x="24" y="8" width="8" height="8"/><rect x="24" y="24" width="8" height="8"/><rect x="32" y="0" width="8" height="8" opacity=".6"/><rect x="32" y="16" width="8" height="8" opacity=".6"/><rect x="32" y="32" width="8" height="8" opacity=".5"/></g></svg>
<div class="abs" style="left:2412px;top:363px;width:2px;height:30px;background:#dcdfe4"></div>
<!-- animate -->
<svg style="left:2440px;top:357px" width="40" height="40" viewBox="0 0 40 40"><circle cx="13" cy="27" r="10.5" fill="none" stroke="#c9ccd1" stroke-width="2.4"/><circle cx="18" cy="22" r="11.5" fill="#fff" stroke="#9a9ea5" stroke-width="2.6"/><circle cx="25" cy="15" r="12.5" fill="#fff" stroke="#14181d" stroke-width="3"/></svg>
<div class="t" style="left:2490px;top:365px;font-size:26.5px;-webkit-text-stroke:.85px;color:#14181d;transform:scaleX(1.107)">Animate</div>
<div class="abs" style="left:2628px;top:363px;width:2px;height:30px;background:#dcdfe4"></div>
<!-- clock -->
<svg style="left:2656px;top:358px" width="38" height="38" viewBox="0 0 38 38"><circle cx="19" cy="19" r="17" fill="none" stroke="#14181d" stroke-width="3"/><path d="M19 8.5 V19.5 L25.5 27" fill="none" stroke="#14181d" stroke-width="3" stroke-linecap="round" stroke-linejoin="round"/></svg>
<div class="t" style="left:2707px;top:365px;font-size:26.5px;-webkit-text-stroke:.85px;color:#14181d;transform:scaleX(1.038)">5.0s</div>
<div class="abs" style="left:2790px;top:363px;width:2px;height:30px;background:#dcdfe4"></div>
<div class="t" style="left:2822px;top:365px;font-size:26.5px;-webkit-text-stroke:.85px;color:#14181d;transform:scaleX(1.103)">Position</div>
<div class="abs" style="left:2956px;top:363px;width:2px;height:30px;background:#dcdfe4"></div>
<!-- paint roller -->
<svg style="left:2986px;top:358px" width="36" height="40" viewBox="0 0 36 40"><rect x="1.6" y="1.6" width="26" height="11" rx="4.5" fill="none" stroke="#14181d" stroke-width="3"/><path d="M28 6 H30 A4.4 4.4 0 0 1 34.4 10.4 V14 A4.4 4.4 0 0 1 30 18.4 H19.5 A3.5 3.5 0 0 0 16 22 V25" fill="none" stroke="#14181d" stroke-width="3" stroke-linecap="round"/><rect x="12.6" y="25" width="6.8" height="13.4" rx="3.4" fill="none" stroke="#14181d" stroke-width="2.8"/></svg>

<!-- page action icons -->
<svg style="left:2961px;top:455px" width="28" height="34" viewBox="0 0 28 34"><path d="M7 14 V9 A7 7 0 0 1 21 9 V10.5" fill="none" stroke="#7d8188" stroke-width="2.8" stroke-linecap="round"/><rect x="1.5" y="14" width="25" height="18.5" rx="4.5" fill="none" stroke="#7d8188" stroke-width="2.8"/><path d="M14 20 V26.5" stroke="#7d8188" stroke-width="4" stroke-linecap="round"/></svg>
<svg style="left:3029px;top:458px" width="31" height="31" viewBox="0 0 31 31"><path d="M6.5 21 H5.5 A4 4 0 0 1 1.5 17 V5.5 A4 4 0 0 1 5.5 1.5 H17 A4 4 0 0 1 21 5.5 V6.5" fill="none" stroke="#7d8188" stroke-width="2.8" stroke-linecap="round"/><rect x="9.5" y="9.5" width="20" height="20" rx="4" fill="none" stroke="#7d8188" stroke-width="2.8"/><path d="M19.5 14.5 V24.5 M14.5 19.5 H24.5" stroke="#7d8188" stroke-width="2.6" stroke-linecap="round"/></svg>
<svg style="left:3099px;top:456px" width="30" height="32" viewBox="0 0 30 32"><path d="M11 6.5 H6.5 A5 5 0 0 0 1.5 11.5 V25 A5 5 0 0 0 6.5 30 H19 A5 5 0 0 0 24 25 V20.5" fill="none" stroke="#7d8188" stroke-width="2.8" stroke-linecap="round"/><path d="M20.5 1.5 V16 M13.2 8.8 H28" stroke="#7d8188" stroke-width="2.8" stroke-linecap="round"/></svg>

<!-- page selection + canvas -->
<div class="abs" style="left:901px;top:501px;width:2246px;height:1270px;border:4.3px solid #9369ee;background:#fff;border-radius:2px"></div>
<div id="canvas" class="abs" style="left:908.8px;top:508.3px;width:2230.6px;height:1254.9px;background:#1f1f1f;overflow:hidden">
<svg style="left:0;top:0" width="2231" height="1255" viewBox="0 0 2231 1255">
 <defs>
  <filter id="grain" x="0" y="0" width="100%" height="100%" color-interpolation-filters="sRGB"><feTurbulence type="fractalNoise" baseFrequency=".45" numOctaves="3" seed="7" result="n"/><feColorMatrix in="n" type="matrix" values="1.9 0 0 0 -.45  1.9 0 0 0 -.45  1.9 0 0 0 -.45  0 0 0 0 1"/></filter>
  <filter id="cloud" x="0" y="0" width="100%" height="100%" color-interpolation-filters="sRGB"><feTurbulence type="fractalNoise" baseFrequency=".006" numOctaves="3" seed="3" result="n"/><feColorMatrix in="n" type="matrix" values="0 0 0 0 1  0 0 0 0 1  0 0 0 0 1  1.2 0 0 0 -.5"/></filter>
  <radialGradient id="vig" cx="50%" cy="50%" r="75%"><stop offset="55%" stop-color="#000" stop-opacity="0"/><stop offset="100%" stop-color="#000" stop-opacity=".25"/></radialGradient>
 </defs>
 <rect width="2231" height="1255" fill="#0d0d0d"/>
 <rect width="2231" height="1255" filter="url(#cloud)" opacity=".035"/>
 <rect width="2231" height="1255" filter="url(#grain)" opacity=".16"/>
 <g stroke-linecap="round"><path d="M1009 703l101 89M1061 771l52 -94M884 569l29 -24M424 304l85 75M1115 831l78 -94M703 288l80 9M2137 1063l3 85M1263 249l33 124M263 309l80 38M425 919l20 23M1928 1223l25 -25M327 554l15 -39M1300 305l-29 135M303 485l41 29M1403 695l33 -29M86 1208l-10 67M391 904l27 -61M2047 256l55 37M1185 1221l94 51M2061 596l54 -75M1630 400l120 58M2041 442l107 -94M1278 784l95 -128M1963 914l58 -78M1148 389l13 62M25 378l-17 93M539 508l96 108M858 732l68 -102M2119 347l13 79M1160 844l51 -43M1355 851l66 50M424 965l47 -75M1405 822l11 62M1593 948l74 33M1767 1137l11 54M1980 8l90 0M1453 257l35 51M871 110l42 -63M185 553l59 -62M78 669l-35 149M1099 1191l83 52M1882 703l55 43M315 684l58 -92M62 1217l-0 42M372 1168l46 79M283 544l43 72M66 327l91 -78M719 446l123 11M1565 1103l95 106M1191 274l147 5M705 395l124 76M296 111l43 36M1401 1003l45 -3M1128 951l22 -25M1700 770l103 94M2209 1163l31 -66M1042 647l37 39M1013 928l44 -57M189 1057l49 82M2192 1010l-6 47M736 676l30 25M762 588l52 40M2145 375l26 110M1564 956l88 4M1126 955l101 -10M1133 1214l70 -73M1491 1199l-21 98M1331 539l93 -4M602 1166l83 -75M912 859l40 -2" stroke="#fff" stroke-width="1.2" opacity="0.05" fill="none"/><path d="M2020 539l1 95M2142 308l111 -94M345 456l-7 147M1660 1023l246 -37M1394 451l241 6M423 312l54 -31M579 34l163 101M1408 468l164 -192M998 1032l-26 253M823 820l132 96M824 122l-3 256M1034 1033l176 29M1705 412l115 -76M984 746l169 -15M494 1215l114 -94M883 486l72 73M1693 1106l292 2M1453 1009l51 -115M235 394l-16 118M492 961l221 -9M1101 674l261 44M1798 1046l212 -138M941 528l83 109M869 664l216 -2M1731 225l54 -124M441 451l2 104M627 217l-36 262M1081 505l101 118M485 169l175 -130M530 14l126 98M1722 182l182 -27M118 718l68 41M602 899l65 -1M419 242l46 180M351 1044l26 219M150 93l98 -194M28 473l203 -172M1884 903l289 15M1684 697l286 -14M1256 908l52 -75M1406 225l55 -100M350 156l194 94M1711 1030l54 200M709 990l66 126M1452 133l88 83" stroke="#fff" stroke-width="1.4" opacity="0.08" fill="none"/><path d="M1202 375l348 380M1151 898l376 224M304 600l317 -52M277 1222l212 4M1664 1126l236 41M1280 1043l311 310M2075 1254l94 -186M919 41l219 115M1267 417l73 365M1048 516l-50 476M1034 1136l340 -52M964 1135l-66 365M1677 382l24 509M1061 132l440 -277M1630 1094l67 353M2016 124l207 -156" stroke="#fff" stroke-width="1.8" opacity="0.075" fill="none"/><path d="M1625 30l74 63M1306 58l4 181M452 1078l-7 42M1418 876l99 -104M683 1026l151 -5M2092 559l71 44M1607 629l73 -113M511 378l97 -60M170 1151l106 -21M1268 206l61 -34M2001 1240l4 49M143 975l121 -1M1886 859l28 51M972 839l118 10M494 728l-16 179M402 191l177 -5M69 143l32 36M949 873l-6 54M1831 215l-7 49M916 457l30 56M1016 935l26 126M1053 1174l56 67M265 1073l42 21M899 815l91 68M877 1058l98 135M1794 603l7 199M1515 1083l189 -33M1385 651l60 57M806 193l37 -22M719 482l37 -80" stroke="#000" stroke-width="1.6" opacity="0.22" fill="none"/><path d="M1356 613l49 294M1214 171l383 252M1862 671l160 -195M770 271l381 20M149 1070l229 -35M1411 113l246 -44M1569 278l285 171M1657 1139l393 -38M51 491l108 433M669 903l342 -64" stroke="#000" stroke-width="2.2" opacity="0.26" fill="none"/></g>
</svg>
</div>
<!-- purple rect -->
<div class="abs" style="left:1176px;top:636px;width:176px;height:138px;background:rgba(112,58,225,.28);border:1.7px solid #8257e6"></div>
<div class="abs" style="left:1093px;top:865px;width:1536px;height:2px;background:rgba(139,61,255,.12)"></div>
<!-- canvas text -->
<div class="ct" style="left:1094px;top:862.5px;width:1480px;text-align:left;transform:scaleX(.985)">In a whimsical town where the sun set</div>
<div class="ct j" style="top:976.5px">in shades of lavender, the townsfolk</div>
<div class="ct j" style="top:1088px">gathered every Thursday evening to</div>
<div class="ct" style="top:1200px;transform:scaleX(.9977)">share stories by the riverbank. Children</div>
<div class="ct j" style="top:1312px">chased fireflies while the aroma of</div>
<div class="ct" style="top:1425.5px">freshly baked pies filled the air.</div>
<!-- cursor -->
<svg style="left:1382px;top:811px" width="24" height="37" viewBox="0 0 24 37"><path d="M1.5 1.5 V29.5 L8 23.5 L13 35 L17.5 33 L12.5 22 H21.5 Z" fill="#fff" stroke="#000" stroke-width="2" stroke-linejoin="round"/></svg>
<!-- add page -->
<div class="abs" style="left:909px;top:1810px;width:2231px;height:75px;border:2px solid #d9dce1;border-radius:16px"></div>
<div class="t" style="left:1953px;top:1834px;font-size:26.5px;-webkit-text-stroke:.85px;color:#24292f;transform:scaleX(1.049)">+ Add page</div>
<!--STAGE-END-->
<div id="bottombar" class="abs"></div>
<!-- notes -->
<svg style="left:859px;top:1941px" width="37" height="30" viewBox="0 0 37 30"><path d="M1.5 3 H26 M1.5 11 H18 M1.5 19 H10.5 M1.5 27 H5.5" stroke="#24292f" stroke-width="3" stroke-linecap="round"/><path d="M28.5 7.2 a3.4 3.4 0 0 1 4.8 4.8 L19.5 25.8 L12.8 27.6 L14.6 20.9 Z M26 9.8 L30.6 14.4" fill="none" stroke="#24292f" stroke-width="2.8" stroke-linejoin="round" stroke-linecap="round"/></svg>
<div class="t" style="left:908px;top:1941px;font-size:27px;-webkit-text-stroke:.85px;color:#24292f;transform:scaleX(1.064)">Notes</div>
<div class="t" style="left:2684px;top:1941px;font-size:27px;-webkit-text-stroke:.85px;color:#24292f;transform:scaleX(0.975)">Page 1 / 1</div>
<!-- slider -->
<div class="abs" style="left:2836px;top:1953px;width:380px;height:5px;border-radius:3px;background:#dfe1e6"></div>
<div class="abs" style="left:2836px;top:1953px;width:178px;height:5px;border-radius:3px;background:#c3c7ce"></div>
<div class="abs" style="left:2994px;top:1937px;width:37px;height:37px;border-radius:50%;background:#fff;box-shadow:0 1px 5px rgba(40,50,70,.35),0 0 1px rgba(40,50,70,.3)"></div>
<div class="t" style="left:3270px;top:1941px;font-size:27px;-webkit-text-stroke:.85px;color:#24292f;transform:scaleX(0.944)">61%</div>
<!-- view icons -->
<svg style="left:3386px;top:1938px" width="36" height="35" viewBox="0 0 36 35"><rect x="1.5" y="1.5" width="33" height="18" rx="2" fill="none" stroke="#24292f" stroke-width="3"/><rect x="1.5" y="25" width="9" height="8" rx="1.5" fill="none" stroke="#24292f" stroke-width="2.8"/><rect x="13.5" y="25" width="9" height="8" rx="1.5" fill="none" stroke="#24292f" stroke-width="2.8"/><rect x="25.5" y="25" width="9" height="8" rx="1.5" fill="none" stroke="#24292f" stroke-width="2.8"/></svg>
<svg style="left:3464px;top:1940px" width="33" height="32" viewBox="0 0 33 32"><rect x="1.5" y="1.5" width="11.5" height="11" rx="2.5" fill="none" stroke="#24292f" stroke-width="2.9"/><rect x="20" y="1.5" width="11.5" height="11" rx="2.5" fill="none" stroke="#24292f" stroke-width="2.9"/><rect x="1.5" y="19.5" width="11.5" height="11" rx="2.5" fill="none" stroke="#24292f" stroke-width="2.9"/><rect x="20" y="19.5" width="11.5" height="11" rx="2.5" fill="none" stroke="#24292f" stroke-width="2.9"/></svg>
<svg style="left:3541px;top:1939px" width="34" height="34" viewBox="0 0 34 34"><path d="M21 2 H32 V13 M32 2 L20.5 13.5 M13 32 H2 V21 M2 32 L13.5 20.5" fill="none" stroke="#24292f" stroke-width="3" stroke-linecap="round" stroke-linejoin="round"/></svg>
<svg style="left:3614px;top:1936px" width="39" height="39" viewBox="0 0 39 39"><circle cx="19.5" cy="19.5" r="17.5" fill="none" stroke="#24292f" stroke-width="3"/><path d="M14 15 A5.6 5.6 0 1 1 21.5 20.2 C19.9 21 19.5 22 19.5 23.6" fill="none" stroke="#24292f" stroke-width="3" stroke-linecap="round"/><circle cx="19.5" cy="29" r="2" fill="#24292f"/></svg>
<!--BOTTOM-DETAILS-->

<!-- TASKBAR -->
<div id="taskbar" class="abs"></div>
<!-- start -->
<svg style="left:30px;top:2016px" width="32" height="32" viewBox="0 0 32 32"><path d="M0 4.4 L13 2.6 V15.2 H0 Z M14.8 2.3 L32 0 V15.2 H14.8 Z M0 16.8 H13 V29.4 L0 27.6 Z M14.8 16.8 H32 V32 L14.8 29.7 Z" fill="#fff"/></svg>
<!-- explorer -->
<svg style="left:122px;top:2013px" width="44" height="37" viewBox="0 0 44 37"><path d="M1 5 A2.5 2.5 0 0 1 3.5 2.5 H15 L19 6.5 H40.5 A2.5 2.5 0 0 1 43 9 V31 H1 Z" fill="#e8a92c"/><path d="M1 10 H43 V32 A2 2 0 0 1 41 34 H3 A2 2 0 0 1 1 32 Z" fill="#fbd568"/><path d="M10 22 H34 V36 H10 Z" fill="#3d97dd"/><path d="M16 27.5 H28 V36 H16 Z" fill="#f5c84d"/><path d="M10 22 H34 V25 H10 Z" fill="#5fb2ee"/></svg>
<!-- chrome 1 -->
<svg style="left:214px;top:2008px" width="52" height="52" viewBox="0 0 52 52"><g transform="translate(1 .5)"><circle cx="22.3" cy="22.3" r="22.3" fill="#fff"/><path d="M22.3 22.3 L3 11.2 A22.3 22.3 0 0 1 41.6 11.2 Z" fill="#e33b2e"/><path d="M22.3 22.3 L41.6 11.2 A22.3 22.3 0 0 1 22.3 44.6 Z" fill="#fbc116"/><path d="M22.3 22.3 L22.3 44.6 A22.3 22.3 0 0 1 3 11.2 Z" fill="#2da94f"/><circle cx="22.3" cy="22.3" r="10.4" fill="#fff"/><circle cx="22.3" cy="22.3" r="8.3" fill="#3b80ef"/></g><circle cx="36" cy="36" r="14.5" fill="#f7e27a"/><path d="M28.5 41 V35 L31 32.5 H38.5 L40 29 L42.5 31.5 L44 33.5 L42 35 H41 V41 H39 V37.5 H32.5 V41 Z" fill="#d4611c"/></svg>
<!-- obs -->
<svg style="left:309px;top:2008px" width="48" height="48" viewBox="0 0 48 48"><circle cx="22.5" cy="22.5" r="20.5" fill="#1b1b1d" stroke="#d9d9d9" stroke-width="2.4"/><g fill="none" stroke="#c9c9c9" stroke-width="2.2"><path d="M22.5 22.5 C18 16 19 9 25 4.5"/><path d="M22.5 22.5 C30.5 21.5 36 26 37 33.5"/><path d="M22.5 22.5 C19.5 30 13 32.5 6 29.5"/></g><circle cx="34.5" cy="35" r="12" fill="#ff0000"/></svg>
<!-- chrome active -->
<div class="abs" style="left:379px;top:1993px;width:87px;height:77px;background:#3b3b3c"></div>
<div class="abs" style="left:466px;top:1993px;width:6px;height:77px;background:#272728"></div>
<svg style="left:401px;top:2008px" width="54" height="52" viewBox="0 0 54 52"><g transform="translate(1 .5)"><circle cx="22.8" cy="22.8" r="22.8" fill="#fff"/><path d="M22.8 22.8 L3.1 11.4 A22.8 22.8 0 0 1 42.5 11.4 Z" fill="#e33b2e"/><path d="M22.8 22.8 L42.5 11.4 A22.8 22.8 0 0 1 22.8 45.6 Z" fill="#fbc116"/><path d="M22.8 22.8 L22.8 45.6 A22.8 22.8 0 0 1 3.1 11.4 Z" fill="#2da94f"/><circle cx="22.8" cy="22.8" r="10.6" fill="#fff"/><circle cx="22.8" cy="22.8" r="8.5" fill="#3b80ef"/></g><circle cx="36.5" cy="36" r="14.8" fill="#e6edf0"/></svg>
<!-- red O -->
<svg style="left:495px;top:2007px" width="48" height="48" viewBox="0 0 48 48"><circle cx="24" cy="24" r="22.8" fill="#272d3e"/><circle cx="24" cy="24" r="13" fill="#2f3c55" stroke="#f0484b" stroke-width="7"/></svg>
<!-- underlines -->
<div class="abs" style="left:106px;top:2065px;width:76px;height:5px;background:#80c0ee"></div>
<div class="abs" style="left:200px;top:2065px;width:75px;height:5px;background:#80c0ee"></div>
<div class="abs" style="left:294px;top:2065px;width:76px;height:5px;background:#80c0ee"></div>
<div class="abs" style="left:379px;top:2065px;width:87px;height:5px;background:#86c4f0"></div>
<div class="abs" style="left:466px;top:2065px;width:6px;height:5px;background:#4f7ea3"></div>
<div class="abs" style="left:481px;top:2065px;width:76px;height:5px;background:#80c0ee"></div>
<!-- tray -->
<div class="t" style="left:2960px;top:2010px;font-size:21px;color:#fff;transform:scaleX(.96)">U:</div>
<div class="t" style="left:2960px;top:2036px;font-size:21px;color:#fff;transform:scaleX(.96)">D:</div>
<div class="t" style="left:2995px;top:2010px;width:100px;text-align:right;font-size:21px;color:#fff;transform:scaleX(.96);transform-origin:100% 0">19 kB/s</div>
<div class="t" style="left:2995px;top:2036px;width:100px;text-align:right;font-size:21px;color:#fff;transform:scaleX(.96);transform-origin:100% 0">2 kB/s</div>
<svg style="left:3110px;top:2024px" width="25" height="15" viewBox="0 0 25 15"><path d="M1.5 13.5 L12.5 2 L23.5 13.5" fill="none" stroke="#fff" stroke-width="2.6"/></svg>
<!-- mic -->
<svg style="left:3155px;top:2015px" width="24" height="34" viewBox="0 0 24 34"><rect x="5.5" y="0" width="13" height="21.5" rx="6" fill="#fff"/><path d="M1.3 14.5 V16 A10.7 10.7 0 0 0 22.7 16 V14.5 M12 26.5 V31.5 M6.5 32.5 H17.5" fill="none" stroke="#fff" stroke-width="1.9"/></svg>
<!-- dark knob -->
<svg style="left:3198px;top:2016px" width="32" height="32" viewBox="0 0 32 32"><circle cx="16" cy="16" r="15.5" fill="#3a3f50"/><path d="M17.5 4.5 C21.5 6.5 24.5 10 25.5 14.5" fill="none" stroke="#f0423f" stroke-width="4.4" stroke-linecap="round"/></svg>
<!-- colourful icon -->
<svg style="left:3246px;top:2018px" width="29" height="29" viewBox="0 0 29 29"><rect x="0" y="1" width="29" height="28" fill="#050505"/><rect x="0" y="0" width="29" height="2" fill="#f4f4f4"/><rect x="0" y="1" width="5" height="28" fill="#3fd04a"/><rect x="5" y="1" width="2" height="28" fill="#f2f2f2"/><rect x="11" y="6" width="8" height="6" fill="#f3c27a"/><rect x="12" y="15" width="8" height="12" fill="#5a6ef0"/><rect x="21" y="5" width="4" height="8" fill="#3f6bd9"/><rect x="21" y="16" width="4" height="4" fill="#e0e0e0"/></svg>
<!-- wifi -->
<svg style="left:3295px;top:2020px" width="27" height="27" viewBox="0 0 27 27"><g fill="none" stroke-linecap="butt"><path d="M1 25.5 A24.5 24.5 0 0 1 25.5 1" stroke="#8d8d8d" stroke-width="2.2"/><path d="M7.5 25.5 A18 18 0 0 1 25.5 7.5" stroke="#c9c9c9" stroke-width="2.4"/><path d="M14 25.5 A11.5 11.5 0 0 1 25.5 14" stroke="#fff" stroke-width="2.6"/></g><circle cx="22.5" cy="22.5" r="3.6" fill="#fff"/></svg>
<!-- volume -->
<svg style="left:3335px;top:2017px" width="35" height="30" viewBox="0 0 35 30"><path d="M1.5 9.5 H6.5 L13.5 2.5 V27.5 L6.5 20.5 H1.5 Z" fill="none" stroke="#fff" stroke-width="2.2" stroke-linejoin="round"/><path d="M17.5 10 A6.5 6.5 0 0 1 17.5 20" fill="none" stroke="#fff" stroke-width="2.1"/><path d="M21.5 6 A11.5 11.5 0 0 1 21.5 24" fill="none" stroke="#bdbdbd" stroke-width="2"/><path d="M25.5 2 A16.5 16.5 0 0 1 25.5 28" fill="none" stroke="#7d7d7d" stroke-width="1.9"/></svg>
<div class="t" style="left:3387px;top:2020px;font-size:23px;color:#fff;transform:scaleX(.87)">ENG</div>
<div class="t" style="left:3486px;top:2003px;font-size:22px;color:#fff;transform:scaleX(.925)">10:30</div>
<div class="t" style="left:3456px;top:2038px;font-size:22px;color:#fff;transform:scaleX(1.0)">04/12/2024</div>
<!-- notifications -->
<svg style="left:3600px;top:2016px" width="33" height="33" viewBox="0 0 33 33"><path d="M0 0 H33 V25 H21.5 L16.5 31.5 L11.5 25 H0 Z" fill="#fff"/><path d="M6 7.5 H27 M6 13 H27 M6 18.5 H19" stroke="#111" stroke-width="2.2"/></svg>
<div class="abs" style="left:3671px;top:1993px;width:2px;height:77px;background:#4a4a4a"></div>
<!-- rounded screen corners -->
<svg style="left:0;top:0" width="3680" height="2070" viewBox="0 0 3680 2070"><path d="M0 0 H21 A21 21 0 0 0 0 21 Z" fill="#fbfcff"/><path d="M3680 0 V21 A21 21 0 0 0 3659 0 Z" fill="#fff"/><path d="M0 2070 V2046 A24 24 0 0 0 24 2070 Z" fill="#fff"/><path d="M3680 2070 H3654 A26 26 0 0 0 3680 2044 Z" fill="#fff"/></svg>
<!--TASKBAR-DETAILS-->
</body>
</html>
